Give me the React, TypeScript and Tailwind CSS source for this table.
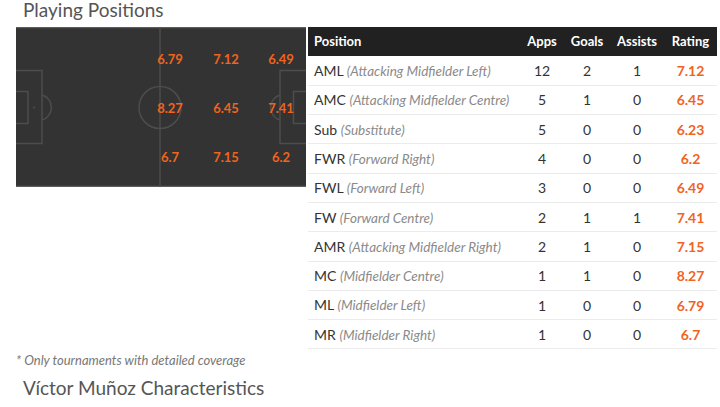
const rows = [
  { code: "AML", name: "Attacking Midfielder Left", apps: 12, goals: 2, assists: 1, rating: "7.12" },
  { code: "AMC", name: "Attacking Midfielder Centre", apps: 5, goals: 1, assists: 0, rating: "6.45" },
  { code: "Sub", name: "Substitute", apps: 5, goals: 0, assists: 0, rating: "6.23" },
  { code: "FWR", name: "Forward Right", apps: 4, goals: 0, assists: 0, rating: "6.2" },
  { code: "FWL", name: "Forward Left", apps: 3, goals: 0, assists: 0, rating: "6.49" },
  { code: "FW", name: "Forward Centre", apps: 2, goals: 1, assists: 1, rating: "7.41" },
  { code: "AMR", name: "Attacking Midfielder Right", apps: 2, goals: 1, assists: 0, rating: "7.15" },
  { code: "MC", name: "Midfielder Centre", apps: 1, goals: 1, assists: 0, rating: "8.27" },
  { code: "ML", name: "Midfielder Left", apps: 1, goals: 0, assists: 0, rating: "6.79" },
  { code: "MR", name: "Midfielder Right", apps: 1, goals: 0, assists: 0, rating: "6.7" },
];

// pitch ratings, x/y are centres inside the pitch box
const marks = [
  { x: 154, y: 32, v: "6.79" },
  { x: 210, y: 32, v: "7.12" },
  { x: 265, y: 32, v: "6.49" },
  { x: 154, y: 81, v: "8.27" },
  { x: 210, y: 81, v: "6.45" },
  { x: 265, y: 81, v: "7.41" },
  { x: 154, y: 130, v: "6.7" },
  { x: 210, y: 130, v: "7.15" },
  { x: 265, y: 130, v: "6.2" },
];

function Pitch() {
  return (
    <div className="relative w-[290px] h-[160px] shrink-0 bg-[#333333]">
      <svg width="290" height="160" className="absolute inset-0" fill="none" stroke="#4d4d4d" strokeWidth="1.5">
        <line x1="0" y1="0.5" x2="290" y2="0.5" stroke="#5c5c5c" />
        <line x1="0" y1="159.5" x2="290" y2="159.5" stroke="#5c5c5c" />
        <line x1="144" y1="0" x2="144" y2="160" />
        <circle cx="144" cy="80.5" r="21" />
        {/* left end */}
        <rect x="-2" y="43.5" width="28" height="73" />
        <rect x="-2" y="64.5" width="14" height="32" />
        <circle cx="18" cy="80.5" r="1" fill="#4d4d4d" stroke="none" />
        <path d="M26 68 A13 13 0 0 1 26 93" />
        {/* right end */}
        <rect x="264" y="43.5" width="28" height="73" />
        <rect x="277.5" y="64.5" width="14" height="32" />
        <path d="M264 68 A13 13 0 0 0 264 93" />
      </svg>
      {marks.map((m) => (
        <span
          key={m.v}
          className="absolute -translate-x-1/2 -translate-y-1/2 text-[13px] font-bold leading-none text-[#f0641e]"
          style={{ left: m.x, top: m.y }}
        >
          {m.v}
        </span>
      ))}
    </div>
  );
}

export default function App() {
  return (
    <div className="w-[720px] h-[407px] bg-white overflow-hidden font-['Lato','Open_Sans',sans-serif]">
      <h2 className="pl-[23px] text-[19px] leading-[20px] text-[#555555]">Playing Positions</h2>

      <div className="mt-[7px] flex pl-4 gap-[2px]">
        <Pitch />

        <table className="w-[409px] border-collapse text-[14px] table-fixed">
          <colgroup>
            <col className="w-[212px]" />
            <col className="w-[44px]" />
            <col className="w-[46px]" />
            <col className="w-[54px]" />
            <col className="w-[53px]" />
          </colgroup>
          <thead>
            <tr className="h-[29px] bg-[#212121] text-white text-[13px] font-bold">
              <th className="pl-[6px] text-left font-bold">Position</th>
              <th className="text-center font-bold">Apps</th>
              <th className="text-center font-bold">Goals</th>
              <th className="text-center font-bold">Assists</th>
              <th className="text-center font-bold">Rating</th>
            </tr>
          </thead>
          <tbody>
            {rows.map((r) => (
              <tr key={r.code} className="h-[29.3px] border-b border-[#ececec] text-[#333333]">
                <td className="pl-[6px] whitespace-nowrap">
                  {r.code} <span className="italic text-[13.5px] text-[#8a8a8a]">({r.name})</span>
                </td>
                <td className="text-center">{r.apps}</td>
                <td className="text-center">{r.goals}</td>
                <td className="text-center">{r.assists}</td>
                <td className="text-center font-bold text-[#f0641e]">{r.rating}</td>
              </tr>
            ))}
          </tbody>
        </table>
      </div>

      <p className="mt-[3px] pl-4 text-[13px] leading-4 italic text-[#777777]">* Only tournaments with detailed coverage</p>
      <h2 className="mt-[8px] pl-[23px] text-[19px] leading-6 text-[#555555]">Víctor Muñoz Characteristics</h2>
    </div>
  );
}
